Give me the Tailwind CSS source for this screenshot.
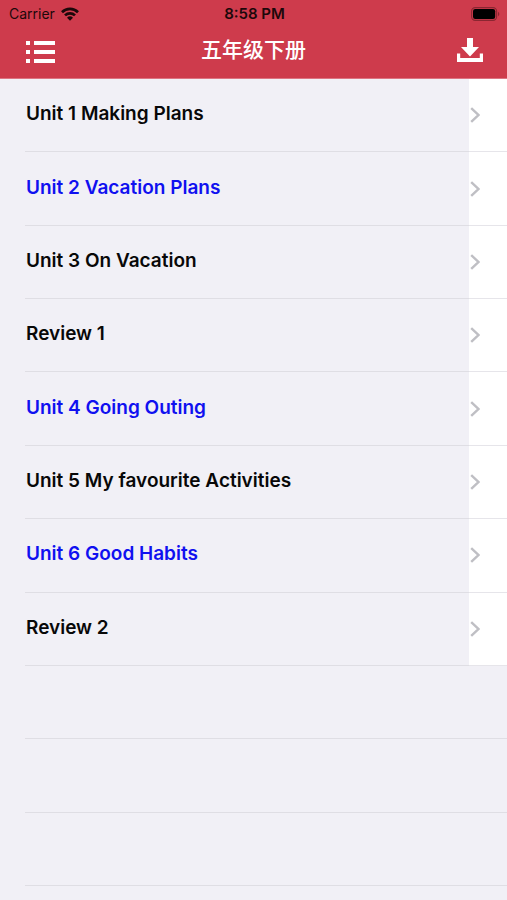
<!DOCTYPE html>
<html lang="zh-CN">
<head>
  <meta charset="UTF-8">
  <meta name="viewport" content="width=device-width, initial-scale=1.0">
  <title>五年级下册</title>
  <script src="https://cdn.jsdelivr.net/npm/@tailwindcss/browser@4"></script>
</head>
<body class="bg-[#f1f0f6] font-['Inter','Noto_Sans_CJK_SC',sans-serif] text-black">
  <div class="flex min-h-screen flex-col pb-[14px]">

    <!-- Header -->
    <header class="bg-[#ce3b4c] border-b border-[#dd7482]">
      <!-- Status bar -->
      <div class="grid grid-cols-3 items-center h-7 pl-[9px] pr-[7px] text-sm text-[#1c080a]">
        <div class="flex items-center gap-[6px]">
          <span>Carrier</span>
          <svg class="w-[18px] h-[14px]" viewBox="0 0 18 14" fill="none" stroke="currentColor" stroke-width="2.7">
            <path d="M1 5.2a11.5 11.5 0 0 1 16 0"/>
            <path d="M4 8.4a7.2 7.2 0 0 1 10 0"/>
            <path d="M9 13.8L6 10.8a4.3 4.3 0 0 1 6 0z" fill="currentColor" stroke="none"/>
          </svg>
        </div>
        <span class="text-center text-[15px] font-semibold">8:58 PM</span>
        <svg class="justify-self-end w-[29px] h-[14px]" viewBox="0 0 29 14">
          <rect x="0.6" y="0.6" width="25" height="12.8" rx="3.6" fill="none" stroke="#8a2631" stroke-width="1.1"/>
          <rect x="2" y="2" width="22.2" height="10" rx="2.2" fill="#000"/>
          <path d="M27 4.8c1.8.8 1.8 3.6 0 4.4z" fill="#8a2631"/>
        </svg>
      </div>
      <!-- Navigation bar -->
      <div class="grid grid-cols-3 items-center h-[50px] px-6 pb-[6px] text-white">
        <button type="button" aria-label="Menu" class="justify-self-start px-[2px] pt-1">
          <svg class="w-[29px] h-[22px]" viewBox="0 0 29 22" fill="currentColor">
            <path d="M0 0h4v4H0zM8 0h21v4H8zM0 9h4v4H0zM8 9h21v4H8zM0 18h4v4H0zM8 18h21v4H8z"/>
          </svg>
        </button>
        <h1 class="text-center text-[21px] leading-7 font-medium">五年级下册</h1>
        <button type="button" aria-label="Download" class="justify-self-end">
          <svg class="w-[26px] h-6" viewBox="0 0 26 24" fill="currentColor">
            <path d="M10 0h6v9h6l-9 9.500L4 9h6z"/>
            <path d="M0 15.500h3.200V20h19.600v-4.500H26V24H0z"/>
          </svg>
        </button>
      </div>
    </header>

    <!-- Unit list -->
    <ul id="units" class="grid flex-1 auto-rows-fr"></ul>
  </div>

  <script>
    const units = [
      { title: 'Unit 1 Making Plans' },
      { title: 'Unit 2 Vacation Plans', highlight: true },
      { title: 'Unit 3 On Vacation' },
      { title: 'Review 1' },
      { title: 'Unit 4 Going Outing', highlight: true },
      { title: 'Unit 5 My favourite Activities' },
      { title: 'Unit 6 Good Habits', highlight: true },
      { title: 'Review 2' }
    ];
    const emptyRows = 3;

    const list = document.getElementById('units');

    units.forEach(unit => {
      list.innerHTML += `
        <li class="flex min-h-[72px]">
          <a href="#" class="flex flex-1 pl-[25px]">
            <span class="flex flex-1 items-center border-b border-[#dfdee4] pl-px pb-[2px] text-[19px] leading-6 font-semibold ${unit.highlight ? 'text-[#1010f0]' : 'text-[#080808]'}">${unit.title}</span>
            <span class="flex w-[38px] items-center border-b border-[#e6e5ea] bg-white pl-px">
              <svg class="w-[10px] h-4" viewBox="0 0 10 16" fill="none" stroke="#bfbfc4" stroke-width="2.4">
                <path d="M1.2 1.2L8.4 8l-7.2 6.8"/>
              </svg>
            </span>
          </a>
        </li>`;
    });

    for (let i = 0; i < emptyRows; i++) {
      list.innerHTML += '<li class="ml-[25px] min-h-[72px] border-b border-[#dfdee4]"></li>';
    }
  </script>
</body>
</html>
